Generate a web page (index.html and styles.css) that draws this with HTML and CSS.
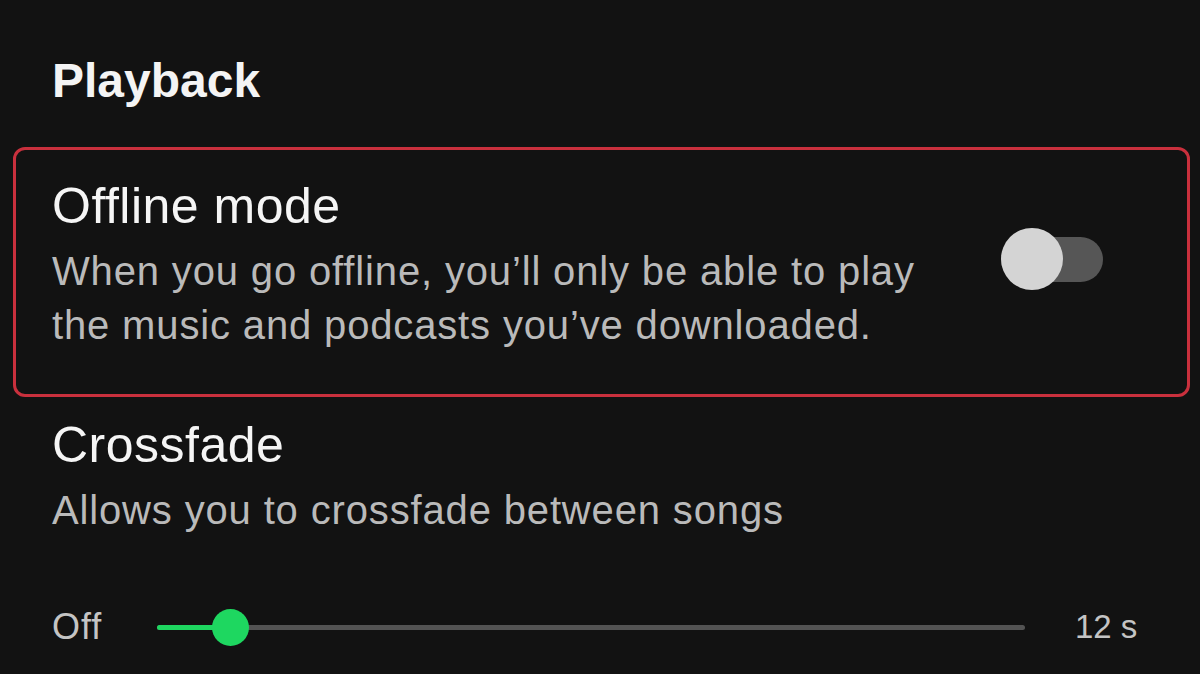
FILE: index.html
```html
<!DOCTYPE html>
<html lang="en">
  <head>
    <meta charset="UTF-8" />
    <title>Playback settings</title>
    <link rel="stylesheet" href="styles.css">
  </head>
  <body>
    <!-- section title -->
    <h2 class="section-title">Playback</h2>

    <!-- offline mode (highlighted) -->
    <div class="setting highlight">
      <div class="setting-text">
        <div class="setting-name">Offline mode</div>
        <div class="setting-desc">When you go offline, you’ll only be able to play<br>the music and podcasts you’ve downloaded.</div>
      </div>
      <div class="toggle">
        <div class="toggle-track"></div>
        <div class="toggle-thumb"></div>
      </div>
    </div>

    <!-- crossfade -->
    <div class="setting plain">
      <div class="setting-text">
        <div class="setting-name">Crossfade</div>
        <div class="setting-desc">Allows you to crossfade between songs</div>
      </div>
    </div>

    <div class="slider-row">
      <span class="slider-label">Off</span>
      <div class="slider">
        <div class="slider-fill" style="width: 73px"></div>
        <div class="slider-thumb" style="left: 73px"></div>
      </div>
      <span class="slider-label right">12 s</span>
    </div>
  </body>
</html>
```

FILE: styles.css
```css
body {
  margin: 0;
  background: #121212;
  color: #ffffff;
  font-family: "Liberation Sans", Arial, sans-serif;
  width: 1200px;
  height: 674px;
  overflow: hidden;
}
.section-title {
  margin: 0;
  padding: 53px 0 0 52px;
  font-size: 48px;
  font-weight: bold;
  line-height: 56px;
  color: #f4f4f4;
}
.setting {
  display: flex;
  align-items: flex-start;
}
.highlight {
  margin: 38px 10px 0 13px;
  height: 250px;
  border: 3px solid #c9303d;
  border-radius: 12px;
  padding: 28px 0 0 36px;
  box-sizing: border-box;
}
.setting-text {
  flex: 1;
}
.setting-name {
  font-size: 50px;
  line-height: 56px;
  letter-spacing: 0.5px;
  color: #f5f5f5;
}
.setting-desc {
  margin-top: 10px;
  font-size: 40px;
  line-height: 54px;
  letter-spacing: 0.85px;
  color: #bababa;
}
.toggle {
  position: relative;
  width: 102px;
  height: 62px;
  margin: 50px 84px 0 0;
}
.toggle-track {
  position: absolute;
  left: 0;
  top: 9px;
  width: 102px;
  height: 45px;
  border-radius: 23px;
  background: #565656;
}
.toggle-thumb {
  position: absolute;
  left: 0;
  top: 0;
  width: 62px;
  height: 62px;
  border-radius: 50%;
  background: #d4d4d4;
}
.plain {
  padding: 20px 0 0 52px;
}
.slider-row {
  display: flex;
  align-items: center;
  padding: 0 0 0 52px;
  margin-top: 60px;
  height: 60px;
}
.slider-label {
  font-size: 36px;
  letter-spacing: 1px;
  color: #c4c4c4;
  width: 105px;
}
.slider-label.right {
  width: auto;
  font-size: 33px;
  letter-spacing: 0;
  margin-left: 50px;
}
.slider {
  position: relative;
  width: 868px;
  height: 5px;
  border-radius: 3px;
  background: #535353;
}
.slider-fill {
  position: absolute;
  left: 0;
  top: 0;
  height: 5px;
  border-radius: 3px;
  background: #1ed760;
}
.slider-thumb {
  position: absolute;
  top: -16px;
  width: 37px;
  height: 37px;
  margin-left: -18px;
  border-radius: 50%;
  background: #1ed760;
}
```
